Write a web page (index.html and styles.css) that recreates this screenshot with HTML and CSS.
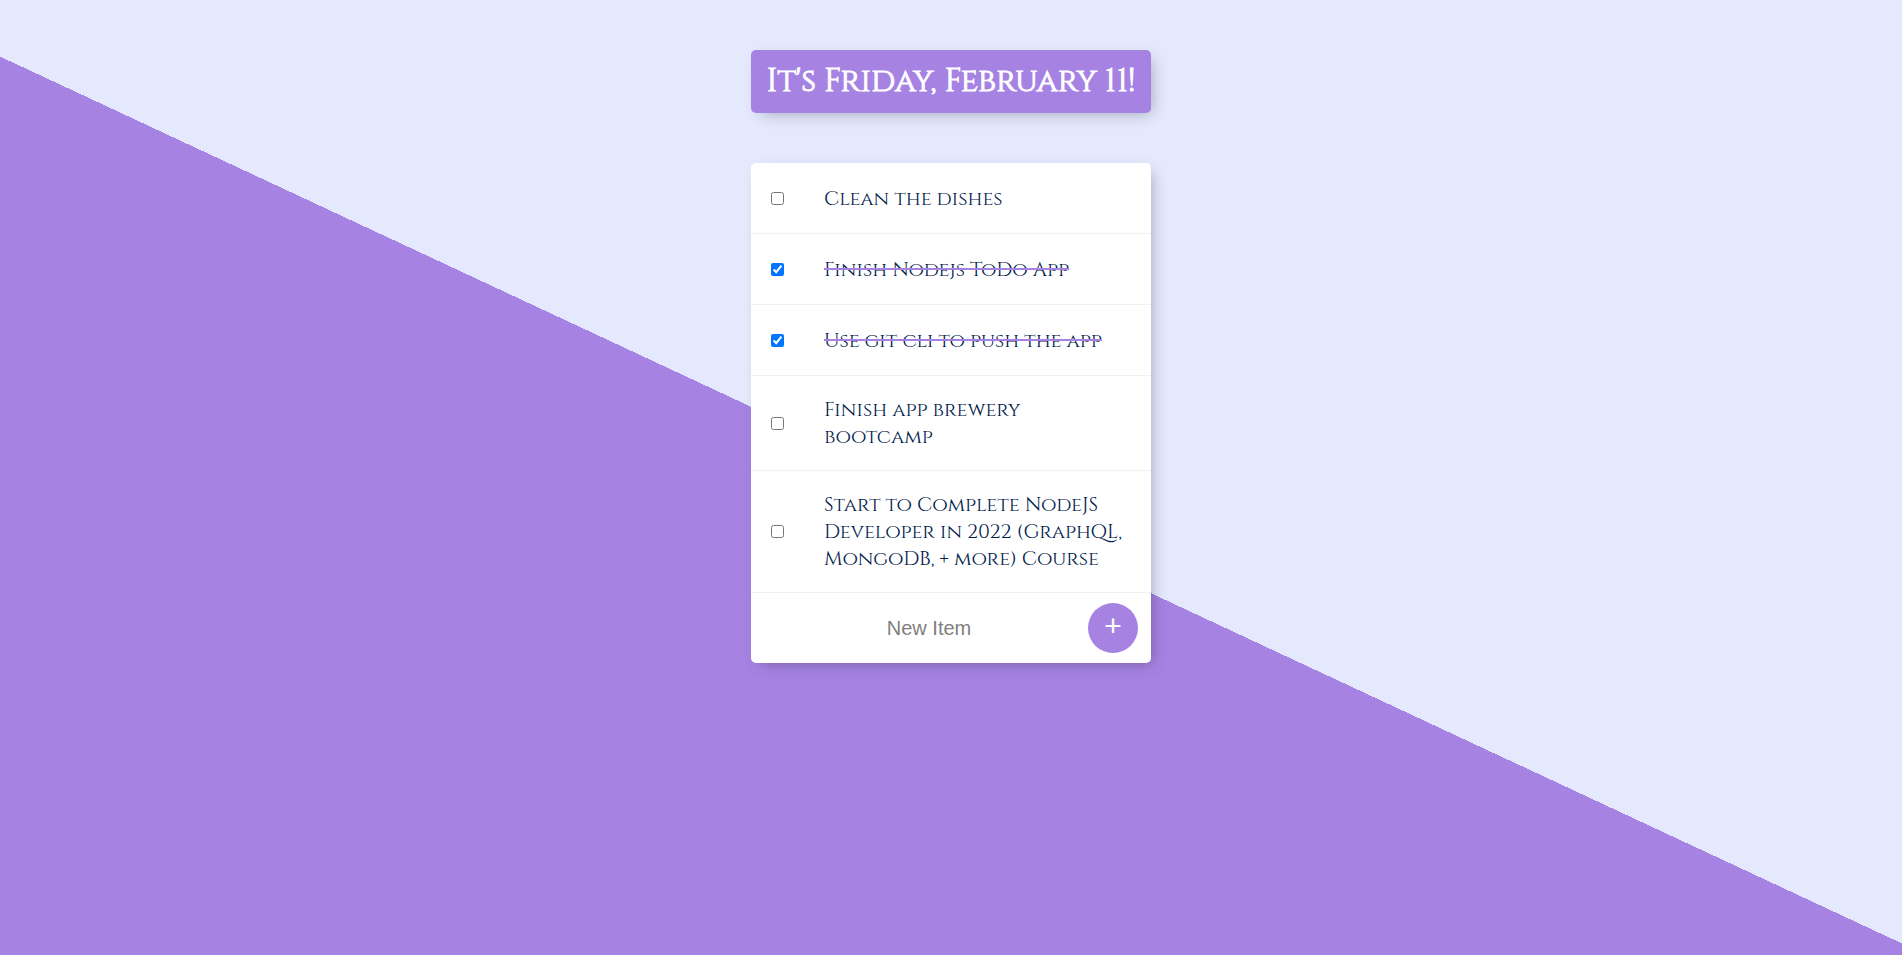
FILE: index.html
```html
<!DOCTYPE html>
<html lang="en">
<head>
  <meta charset="utf-8">
  <title>To Do List</title>
  <link rel="stylesheet" href="styles.css">
</head>
<body>
  <header class="box heading">
    <h1>It's Friday, February 11!</h1>
  </header>
  <main class="box">
    <div class="item">
      <input type="checkbox" id="item-1">
      <label for="item-1">Clean the dishes</label>
    </div>
    <div class="item">
      <input type="checkbox" id="item-2" checked>
      <label for="item-2">Finish Nodejs ToDo App</label>
    </div>
    <div class="item">
      <input type="checkbox" id="item-3" checked>
      <label for="item-3">Use git cli to push the app</label>
    </div>
    <div class="item">
      <input type="checkbox" id="item-4">
      <label for="item-4">Finish app brewery bootcamp</label>
    </div>
    <div class="item">
      <input type="checkbox" id="item-5">
      <label for="item-5">Start to Complete NodeJS Developer in 2022 (GraphQL, MongoDB, + more) Course</label>
    </div>
    <form class="item new-item">
      <input type="text" name="newItem" placeholder="New Item" aria-label="New Item" autocomplete="off">
      <button type="submit" aria-label="Add item">+</button>
    </form>
  </main>
</body>
</html>
```
FILE: styles.css
```css
html {
  min-height: 1000px;
  background: #e4e9fd linear-gradient(25deg, #a683e3 50%, #e4e9fd 50%) no-repeat;
}

body {
  margin: 0;
  font-family: Cinzel, "Liberation Serif", serif;
}

.box {
  max-width: 400px;
  margin: 50px auto;
  background: #fff;
  border-radius: 5px;
  box-shadow: 5px 5px 15px -5px rgba(0, 0, 0, 0.3);
}

.heading {
  background: #a683e3;
  text-align: center;
}

h1 {
  margin: 0;
  padding: 10px;
  color: #fff;
  font-size: 32px;
  font-weight: 400;
  line-height: 43px;
  -webkit-text-stroke: 1px #fff;
}

.item {
  display: flex;
  align-items: center;
  min-height: 70px;
  border-bottom: 1px solid #f1f1f1;
}

.item:last-child {
  border-bottom: 0;
}

.item input[type="checkbox"] {
  flex: none;
  margin: 20px;
}

.item label {
  padding: 20px;
  color: #00204a;
  font-size: 20px;
  line-height: 27px;
}

.item input:checked + label {
  text-decoration: line-through 2px #a683e3;
}

.new-item {
  gap: 1px;
  padding: 0 13px 0 20px;
}

.new-item input {
  flex: 1;
  min-width: 0;
  height: 60px;
  border: 0;
  background: transparent;
  font: 20px "Liberation Sans", Arial, sans-serif;
  text-align: center;
}

.new-item input::placeholder {
  color: #808080;
}

.new-item input:focus {
  outline: 0;
}

.new-item button {
  flex: none;
  width: 50px;
  height: 50px;
  padding: 0 0 4px;
  border: 0;
  border-radius: 50%;
  background: #a683e3;
  color: #fff;
  font: 30px "Liberation Sans", Arial, sans-serif;
}
```
